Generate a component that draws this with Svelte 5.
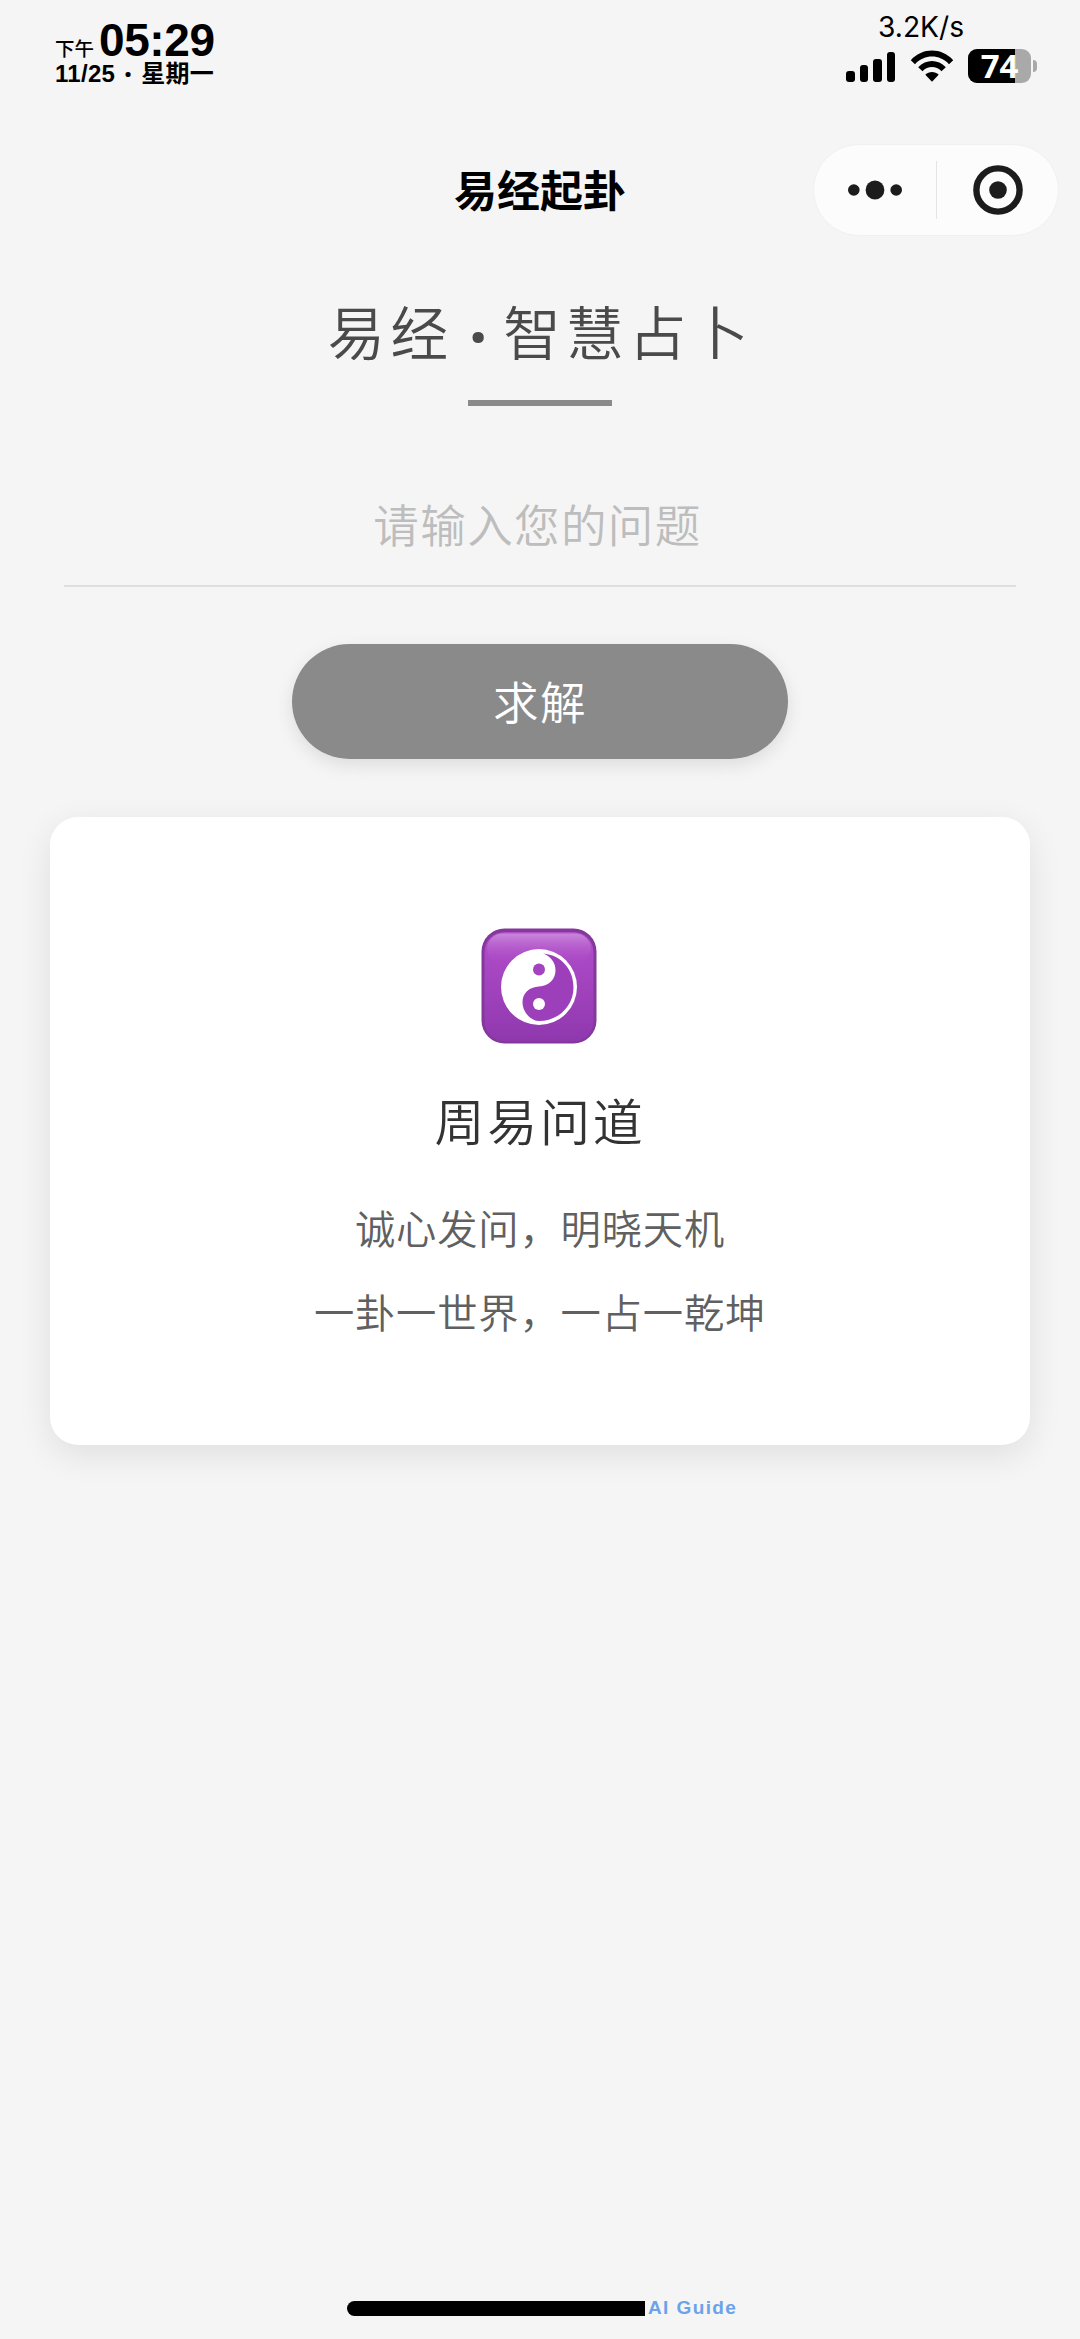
<script lang="ts">
  let question = $state("");

  const battery = 74;
  const bars = [11, 17, 23, 30];
  const lines = ["诚心发问，明晓天机", "一卦一世界，一占一乾坤"];
</script>

<div class="screen">
  <header class="status">
    <div class="clock">
      <div class="time"><span class="period">下午</span><strong>05:29</strong></div>
      <div class="date"><span>11/25</span><span class="sep">·</span><span>星期一</span></div>
    </div>
    <div class="signals">
      <div class="speed">3.2K/s</div>
      <div class="icons">
        <div class="bars">
          {#each bars as h}
            <i style="height: {h}px"></i>
          {/each}
        </div>
        <svg class="wifi" width="44" height="32" viewBox="0 0 44 32">
          <path d="M0.8 10.2C12.5-2.6 31.5-2.6 43.2 10.2L39 14.2C29.5 4 14.5 4 5 14.2Z" />
          <path d="M8.2 17.2C16 8.9 28 8.9 35.8 17.2L31.5 21.2C26 15.6 18 15.6 12.5 21.2Z" />
          <path d="M15.3 24.8C19 21.2 25 21.2 28.7 24.8L22 31.7Z" />
        </svg>
        <div class="battery">
          <div class="cell">
            <div class="level" style="width: {battery}%"></div>
            <span>{battery}</span>
          </div>
          <div class="nub"></div>
        </div>
      </div>
    </div>
  </header>

  <nav>
    <div class="nav-title">易经起卦</div>
    <div class="capsule">
      <button aria-label="更多">
        <svg width="56" height="24" viewBox="0 0 56 24">
          <circle cx="6.8" cy="12" r="5.8" />
          <circle cx="28" cy="12" r="9.4" />
          <circle cx="49.2" cy="12" r="5.8" />
        </svg>
      </button>
      <div class="divider"></div>
      <button class="close" aria-label="关闭">
        <svg width="50" height="50" viewBox="0 0 50 50">
          <circle class="ring" cx="25" cy="25" r="21.6" />
          <circle cx="25" cy="25" r="8.8" />
        </svg>
      </button>
    </div>
  </nav>

  <main>
    <h1>易经<span class="dot">·</span>智慧占卜</h1>
    <div class="underline"></div>

    <input class="question" placeholder="请输入您的问题" bind:value={question} />
    <button class="solve">求解</button>

    <section class="card">
      <svg class="symbol" width="116" height="116" viewBox="0 0 116 116">
        <defs>
          <linearGradient id="tile" x1="0" y1="0" x2="0" y2="1">
            <stop offset="0" stop-color="#b04fc8" />
            <stop offset="0.35" stop-color="#a746c2" />
            <stop offset="1" stop-color="#8f38ae" />
          </linearGradient>
          <linearGradient id="gloss" x1="0" y1="0" x2="0" y2="1">
            <stop offset="0" stop-color="#c987dc" />
            <stop offset="1" stop-color="#b04cc8" stop-opacity="0" />
          </linearGradient>
        </defs>
        <rect x="0.5" y="0.5" width="115" height="115" rx="23" fill="#84389c" />
        <rect x="3.5" y="4" width="109" height="109" rx="20" fill="url(#tile)" />
        <rect x="6" y="5.5" width="104" height="30" rx="16" fill="url(#gloss)" />
        <circle cx="58" cy="59" r="38" fill="#fff" />
        <path
          d="M62 25.5C80 27 92.5 41 92.5 59.5C92.5 78 77.5 93 58 93C49 93 41.5 83 41.5 74.5C41.5 65 48 59 58 58.5C68 58 74.5 51 74.5 42.5C74.5 34 69 28 62 25.5Z"
          fill="#9d3fba"
        />
        <circle cx="58" cy="41.5" r="6" fill="#a443bf" />
        <circle cx="58" cy="76" r="6" fill="#fff" />
      </svg>
      <h2>周易问道</h2>
      {#each lines as line}
        <p>{line}</p>
      {/each}
    </section>
  </main>

  <footer>
    <div class="home"></div>
    <span>AI Guide</span>
  </footer>
</div>

<style>
  :global(body) { background: #f5f5f5; }
  .screen {
    width: 1080px; height: 2339px; box-sizing: border-box; overflow: hidden;
    display: flex; flex-direction: column; background: #f5f5f5; color: #000;
    font-family: "Liberation Sans", "Noto Sans CJK SC", sans-serif;
  }
  button { border: 0; padding: 0; background: none; font: inherit; }

  .status {
    display: flex; justify-content: space-between; align-items: flex-start;
    height: 144px; padding: 0 41px 0 55px; box-sizing: border-box;
  }
  .clock { padding-top: 18px; }
  .time { display: flex; align-items: baseline; height: 43px; line-height: 44px; }
  .period { font-size: 19.5px; width: 44px; font-weight: 500; }
  .time strong { font-size: 46px; letter-spacing: -0.4px; }
  .date {
    display: flex; height: 26px; line-height: 26px;
    font-size: 24px; font-weight: 700; white-space: nowrap;
  }
  .date span { letter-spacing: 0.3px; }
  .date .sep { width: 26px; font-family: "Open Sans", sans-serif; font-size: 30px; text-align: center; }

  .signals { width: 193px; padding-top: 10px; }
  .speed {
    height: 34px; line-height: 34px; padding-left: 32px;
    font-family: Inter, sans-serif; font-size: 28.2px;
  }
  .icons { display: flex; align-items: flex-end; height: 39px; }
  .bars { display: flex; align-items: flex-end; gap: 5px; width: 64px; height: 32px; padding-bottom: 1px; }
  .bars i { width: 8.5px; border-radius: 3px; background: #000; }
  .wifi { margin-bottom: 1px; flex: none; }
  .battery { display: flex; align-items: center; gap: 2px; margin-left: 14px; }
  .cell { position: relative; width: 63px; height: 34px; border-radius: 9px; background: #a9a9a9; }
  .level { height: 100%; border-radius: 9px 0 0 9px; background: #000; }
  .cell span {
    position: absolute; inset: 0; color: #fff; line-height: 34px; text-align: center;
    font-family: "Open Sans", sans-serif; font-size: 33px; font-weight: 700;
  }
  .nub { width: 4px; height: 12px; border-radius: 0 5px 5px 0; background: #a9a9a9; }

  nav {
    display: grid; grid-template-columns: 1fr auto 1fr; align-items: center;
    height: 92px; padding: 0 21px;
  }
  .nav-title {
    grid-column: 2; padding-top: 3px; white-space: nowrap;
    font-size: 43px; font-weight: 700; line-height: 60px;
  }
  .capsule {
    justify-self: end; display: flex; align-items: center; width: 246px; height: 92px;
    box-sizing: border-box; border: 1px solid #f0f0f0; border-radius: 46px; background: #fcfcfc;
  }
  .capsule button { flex: 1; display: flex; align-items: center; justify-content: center; }
  .capsule .close { flex: 0 0 121px; padding-left: 1px; box-sizing: border-box; }
  .capsule circle { fill: #1c1c1c; }
  .capsule .ring { fill: none; stroke: #1c1c1c; stroke-width: 6.4; }
  .divider { width: 1px; height: 58px; background: #e4e4e4; }

  main { display: flex; flex-direction: column; align-items: center; }
  h1 {
    height: 84px; margin: 52px 0 0; padding-left: 2px; font-size: 57.6px; font-weight: 350;
    line-height: 84px; letter-spacing: 5.2px; color: #4a4a4a; white-space: nowrap;
    font-family: "Noto Sans CJK SC", sans-serif;
  }
  .dot {
    display: inline-block; width: 50px; text-align: center; line-height: 60px;
    vertical-align: -6px; letter-spacing: 0;
    font-family: "Open Sans", sans-serif; font-size: 66px; font-weight: 700;
  }
  .underline { width: 144px; height: 6px; margin-top: 28px; background: #8a8a8a; }
  .question {
    width: 952px; height: 113px; margin-top: 60px; padding: 0 0 6px; box-sizing: content-box;
    border: 0; border-bottom: 2px solid #dfdfdf; border-radius: 0; background: none; outline: none;
    font-family: "Noto Sans CJK SC", sans-serif; font-size: 45.5px; font-weight: 350;
    letter-spacing: 1.4px; text-align: center; text-indent: -5px; color: #4a4a4a;
  }
  .question::placeholder { color: #bdbdbd; }
  .solve {
    width: 496px; height: 115px; margin-top: 57px; padding-bottom: 4px; border-radius: 58px;
    background: #8a8a8a; color: #fff; box-shadow: 0 6px 18px rgba(0, 0, 0, 0.1);
    font-family: "Noto Sans CJK SC", sans-serif; font-size: 45.5px; font-weight: 350;
    letter-spacing: 1.4px;
  }
  .card {
    display: flex; flex-direction: column; align-items: center;
    width: 980px; height: 628px; margin-top: 58px; padding-top: 111px; box-sizing: border-box;
    border-radius: 28px; background: #fff; box-shadow: 0 10px 34px rgba(0, 0, 0, 0.09);
    font-family: "Noto Sans CJK SC", sans-serif;
  }
  .symbol { display: block; margin-right: 3px; }
  h2 {
    margin: 38px 0 29px; font-size: 50px; font-weight: 350; line-height: 74px;
    letter-spacing: 2.8px; color: #333;
  }
  p {
    margin: 0; font-size: 40.32px; font-weight: 350; line-height: 83.5px;
    letter-spacing: 0.8px; color: #606060;
  }

  footer {
    display: flex; align-items: center; gap: 3px; height: 16px;
    margin-top: auto; padding: 0 0 23px 347px;
  }
  .home { width: 298px; height: 15px; border-radius: 8px 0 0 8px; background: #000; }
  footer span { color: #6ba3ea; font-size: 19px; font-weight: 700; line-height: 16px; letter-spacing: 1.4px; }
</style>
